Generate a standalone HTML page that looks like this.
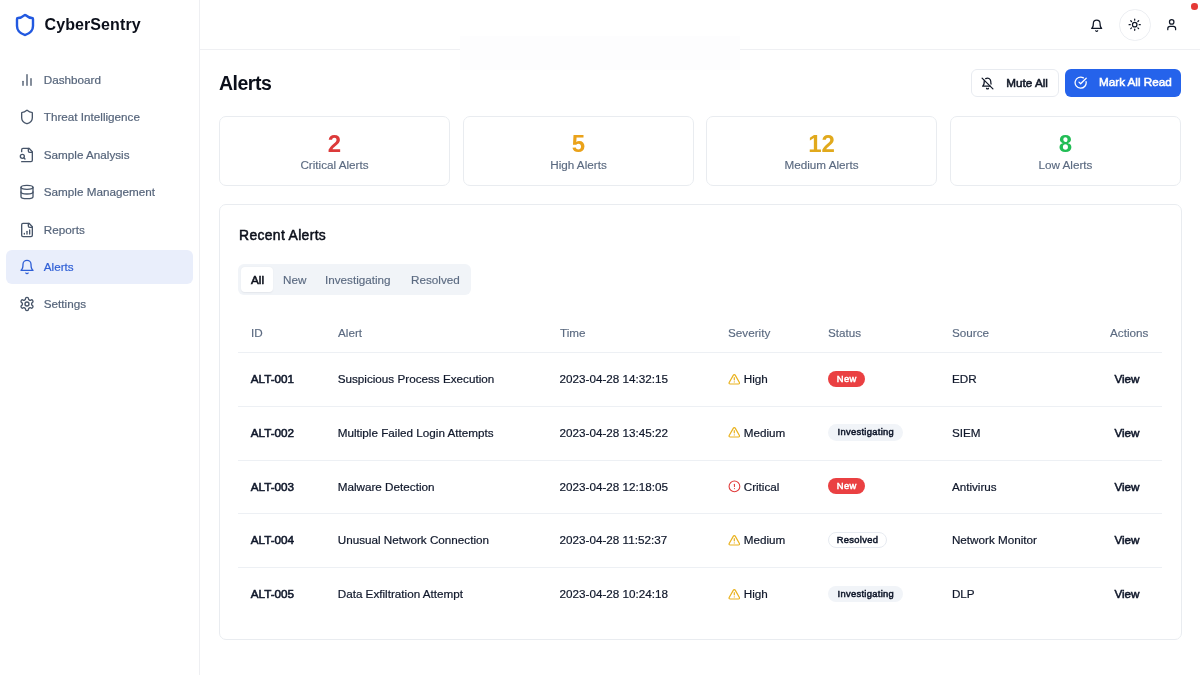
<!DOCTYPE html>
<html><head><meta charset="utf-8">
<style>
*{box-sizing:border-box;margin:0;padding:0}
html,body{width:1200px;height:675px;overflow:hidden;background:#fff;font-family:"Liberation Sans",sans-serif;color:#0f172a}
.abs{position:absolute}
svg{display:block;fill:none;stroke:currentColor;stroke-width:2;stroke-linecap:round;stroke-linejoin:round}
.t{position:absolute;white-space:nowrap;line-height:1}
#sidebar{position:absolute;left:0;top:0;width:200px;height:675px;border-right:1px solid #eeeff2;background:#fff}
.nav{position:absolute;left:6.3px;width:186.7px;height:34px;border-radius:6px}
.nav.active{background:#e9eefb}
.nav svg{position:absolute;left:12.5px;top:9px;width:16px;height:16px;color:#475569}
.nav span{position:absolute;left:37.5px;top:11px;font-size:11.7px;line-height:12px;color:#56657b;-webkit-text-stroke:0.2px currentColor;white-space:nowrap}
.nav.active svg,.nav.active span{color:#2f5fd6}
#header{position:absolute;left:200px;top:0;width:1000px;height:50px;border-bottom:1px solid #eff0f3}
.card{position:absolute;border:1px solid #e9ecf0;border-radius:7px;background:#fff}
.stat{top:116px;height:70px;width:231px}
.stat .num{position:absolute;left:0;right:0;text-align:center;top:131px;font-weight:bold;font-size:24px;line-height:24px}
.stat .lbl{position:absolute;left:0;right:0;text-align:center;font-size:11.7px;line-height:12px;color:#5b6a80;-webkit-text-stroke:0.15px currentColor}
.th{position:absolute;top:327px;font-size:11.7px;line-height:12px;color:#5b6a80;-webkit-text-stroke:0.15px currentColor;white-space:nowrap}
.row{position:absolute;left:238px;width:924px;height:54px;border-top:1px solid #edf0f4}
.cell{position:absolute;top:20px;font-size:11.7px;line-height:12px;white-space:nowrap;color:#0f172a;-webkit-text-stroke:0.2px currentColor}
.badge{position:absolute;top:17.6px;height:16.3px;border-radius:9px;font-size:9.4px;letter-spacing:0.3px;-webkit-text-stroke:0.5px currentColor;line-height:15.6px;text-align:center;white-space:nowrap}
.med{font-weight:normal;-webkit-text-stroke:0.55px currentColor!important}
body>*{will-change:transform}
</style></head><body>
<div id="sidebar">
  <svg class="abs" style="left:12.85px;top:12.8px;width:24px;height:24px;color:#2259e0;stroke-width:2.4" viewBox="0 0 24 24"><path d="M20 13c0 5-3.5 7.5-7.66 8.95a1 1 0 0 1-.67-.01C7.5 20.5 4 18 4 13V6a1 1 0 0 1 1-1c2 0 4.5-1.2 6.24-2.72a1.17 1.17 0 0 1 1.52 0C14.51 3.81 17 5 19 5a1 1 0 0 1 1 1z"/></svg>
  <div class="t" style="left:44.5px;top:17.2px;font-size:16px;letter-spacing:0.1px;font-weight:bold;color:#0b0f1a">CyberSentry</div>

  <div class="nav" style="top:63px"><svg viewBox="0 0 24 24"><line x1="18" x2="18" y1="20" y2="10"/><line x1="12" x2="12" y1="20" y2="4"/><line x1="6" x2="6" y1="20" y2="14"/></svg><span>Dashboard</span></div>
  <div class="nav" style="top:100.4px"><svg viewBox="0 0 24 24"><path d="M20 13c0 5-3.5 7.5-7.66 8.95a1 1 0 0 1-.67-.01C7.5 20.5 4 18 4 13V6a1 1 0 0 1 1-1c2 0 4.5-1.2 6.24-2.72a1.17 1.17 0 0 1 1.52 0C14.51 3.81 17 5 19 5a1 1 0 0 1 1 1z"/></svg><span>Threat Intelligence</span></div>
  <div class="nav" style="top:137.8px"><svg viewBox="0 0 24 24"><path d="M4 22h14a2 2 0 0 0 2-2V7l-5-5H6a2 2 0 0 0-2 2v3"/><path d="M14 2v4a2 2 0 0 0 2 2h4"/><path d="M5 17a3 3 0 1 0 0-6 3 3 0 0 0 0 6z"/><path d="m9 18-1.5-1.5"/></svg><span>Sample Analysis</span></div>
  <div class="nav" style="top:175.2px"><svg viewBox="0 0 24 24"><ellipse cx="12" cy="5" rx="9" ry="3"/><path d="M3 5V19A9 3 0 0 0 21 19V5"/><path d="M3 12A9 3 0 0 0 21 12"/></svg><span>Sample Management</span></div>
  <div class="nav" style="top:212.6px"><svg viewBox="0 0 24 24"><path d="M15 2H6a2 2 0 0 0-2 2v16a2 2 0 0 0 2 2h12a2 2 0 0 0 2-2V7Z"/><path d="M14 2v4a2 2 0 0 0 2 2h4"/><path d="M8 18v-1"/><path d="M12 18v-4"/><path d="M16 18v-6"/></svg><span>Reports</span></div>
  <div class="nav active" style="top:250px"><svg viewBox="0 0 24 24"><path d="M6 8a6 6 0 0 1 12 0c0 7 3 9 3 9H3s3-2 3-9"/><path d="M10.3 21a1.94 1.94 0 0 0 3.4 0"/></svg><span>Alerts</span></div>
  <div class="nav" style="top:287.4px"><svg viewBox="0 0 24 24"><path d="M12.22 2h-.44a2 2 0 0 0-2 2v.18a2 2 0 0 1-1 1.73l-.43.25a2 2 0 0 1-2 0l-.15-.08a2 2 0 0 0-2.73.73l-.22.38a2 2 0 0 0 .73 2.73l.15.1a2 2 0 0 1 1 1.72v.51a2 2 0 0 1-1 1.74l-.15.09a2 2 0 0 0-.73 2.730l.22.38a2 2 0 0 0 2.73.73l.15-.08a2 2 0 0 1 2 0l.43.25a2 2 0 0 1 1 1.73V20a2 2 0 0 0 2 2h.44a2 2 0 0 0 2-2v-.18a2 2 0 0 1 1-1.73l.43-.25a2 2 0 0 1 2 0l.15.08a2 2 0 0 0 2.73-.73l.22-.39a2 2 0 0 0-.73-2.73l-.15-.08a2 2 0 0 1-1-1.74v-.5a2 2 0 0 1 1-1.74l.15-.09a2 2 0 0 0 .73-2.73l-.22-.38a2 2 0 0 0-2.73-.73l-.15.08a2 2 0 0 1-2 0l-.43-.25a2 2 0 0 1-1-1.73V4a2 2 0 0 0-2-2z"/><circle cx="12" cy="12" r="3"/></svg><span>Settings</span></div>
</div>

<div id="header">
  <div class="abs" style="left:260px;top:36px;width:280px;height:34px;background:#fdfdfe"></div>
</div>

<!-- header icons -->
<svg class="abs" style="left:1090.1px;top:18.8px;width:13.4px;height:13.4px;color:#111827;stroke-width:2.2" viewBox="0 0 24 24"><path d="M6 8a6 6 0 0 1 12 0c0 7 3 9 3 9H3s3-2 3-9"/><path d="M10.3 21a1.94 1.94 0 0 0 3.4 0"/></svg>
<div class="abs" style="left:1118.5px;top:9px;width:31.5px;height:31.5px;border-radius:50%;border:1px solid #eceef2"></div>
<svg class="abs" style="left:1127.6px;top:18.1px;width:13.4px;height:13.4px;color:#111827;stroke-width:2.2" viewBox="0 0 24 24"><circle cx="12" cy="12" r="4"/><path d="M12 2v2"/><path d="M12 20v2"/><path d="m4.93 4.93 1.41 1.41"/><path d="m17.66 17.66 1.41 1.41"/><path d="M2 12h2"/><path d="M20 12h2"/><path d="m6.34 17.66-1.41 1.41"/><path d="m19.07 4.93-1.41 1.41"/></svg>
<svg class="abs" style="left:1165.1px;top:18.1px;width:13.4px;height:13.4px;color:#111827;stroke-width:2.2" viewBox="0 0 24 24"><path d="M19 21v-2a4 4 0 0 0-4-4H9a4 4 0 0 0-4 4v2"/><circle cx="12" cy="7" r="4"/></svg>
<div class="abs" style="left:1190.5px;top:3px;width:6.6px;height:6.6px;border-radius:50%;background:#e53935"></div>

<!-- title -->
<div class="t" style="left:219px;top:73.8px;font-size:19.5px;letter-spacing:-0.5px;font-weight:bold;color:#0b0f1a">Alerts</div>

<!-- buttons -->
<div class="abs" style="left:971px;top:69px;width:87.5px;height:28px;border:1px solid #e8ebf0;border-radius:6px;background:#fff">
  <svg class="abs" style="left:8.8px;top:7.2px;width:13px;height:13px;color:#111827;stroke-width:2.3" viewBox="0 0 24 24"><path d="M8.7 3A6 6 0 0 1 18 8a21.3 21.3 0 0 0 .6 5"/><path d="M17 17H3s3-2 3-9a4.67 4.67 0 0 1 .3-1.7"/><path d="M10.3 21a1.94 1.94 0 0 0 3.4 0"/><path d="m2 2 20 20"/></svg>
  <div class="t med" style="left:34.3px;top:6.5px;font-size:11.7px;color:#111827">Mute All</div>
</div>
<div class="abs" style="left:1065px;top:69px;width:116px;height:28px;border-radius:6px;background:#2563eb">
  <svg class="abs" style="left:9.2px;top:7.4px;width:13.3px;height:13.3px;color:#fff;stroke-width:2.3" viewBox="0 0 24 24"><path d="M21.801 10A10 10 0 1 1 17 3.335"/><path d="m9 11 3 3L22 4"/></svg>
  <div class="t med" style="left:34px;top:6.5px;font-size:11.7px;color:#fff">Mark All Read</div>
</div>

<!-- stat cards -->
<div class="card stat" style="left:219px"><div class="num" style="top:14.5px;color:#dc3a3a">2</div><div class="lbl" style="top:41.5px">Critical Alerts</div></div>
<div class="card stat" style="left:462.7px"><div class="num" style="top:14.5px;color:#eaa21a">5</div><div class="lbl" style="top:41.5px">High Alerts</div></div>
<div class="card stat" style="left:706.3px"><div class="num" style="top:14.5px;color:#e1a91c">12</div><div class="lbl" style="top:41.5px">Medium Alerts</div></div>
<div class="card stat" style="left:950.1px"><div class="num" style="top:14.5px;color:#22bd55">8</div><div class="lbl" style="top:41.5px">Low Alerts</div></div>

<!-- recent alerts card -->
<div class="card" style="left:219px;top:204px;width:962.5px;height:436px"></div>
<div class="t" style="left:238.5px;top:229.3px;font-size:13.9px;letter-spacing:0.35px;-webkit-text-stroke:0.5px currentColor;color:#0b0f1a">Recent Alerts</div>

<div class="abs" style="left:238.3px;top:264.4px;width:232.7px;height:30.8px;border-radius:6px;background:#f1f4f8">
  <div class="abs" style="left:3.2px;top:3.1px;width:31.5px;height:24.5px;border-radius:4px;background:#fff;box-shadow:0 0.5px 1.5px rgba(15,23,42,.06)"></div>
</div>
<div class="t med" style="left:250.8px;top:274px;font-size:11.7px;color:#0b0f1a">All</div>
<div class="t" style="left:283px;top:274px;font-size:11.7px;color:#5b6a80;-webkit-text-stroke:0.15px currentColor">New</div>
<div class="t" style="left:325.2px;top:274px;font-size:11.7px;color:#5b6a80;-webkit-text-stroke:0.15px currentColor">Investigating</div>
<div class="t" style="left:410.8px;top:274px;font-size:11.7px;color:#5b6a80;-webkit-text-stroke:0.15px currentColor">Resolved</div>

<!-- table header -->
<div class="th" style="left:250.8px">ID</div>
<div class="th" style="left:337.7px">Alert</div>
<div class="th" style="left:559.5px">Time</div>
<div class="th" style="left:727.9px">Severity</div>
<div class="th" style="left:828.3px">Status</div>
<div class="th" style="left:951.9px">Source</div>
<div class="th" style="left:1110.2px">Actions</div>

<div id="rows">
<div class="row" style="top:352.0px">
  <div class="cell med" style="left:12.8px">ALT-001</div>
  <div class="cell" style="left:99.7px">Suspicious Process Execution</div>
  <div class="cell" style="left:321.5px">2023-04-28 14:32:15</div>
  <svg class="abs" style="left:489.7px;top:19.6px;width:12.6px;height:12.6px;color:#e9b21e;stroke-width:2.3" viewBox="0 0 24 24"><path d="m21.73 18-8-14a2 2 0 0 0-3.48 0l-8 14A2 2 0 0 0 4 21h16a2 2 0 0 0 1.73-3Z"/><path d="M12 9v4"/><path d="M12 17h.01"/></svg><div class="cell" style="left:505.7px">High</div>
  <div class="badge" style="left:590.1px;width:37.2px;background:#ea4042;color:#fff">New</div>
  <div class="cell" style="left:713.9px">EDR</div>
  <div class="cell med" style="left:876.4px">View</div>
</div>
<div class="row" style="top:405.8px">
  <div class="cell med" style="left:12.8px">ALT-002</div>
  <div class="cell" style="left:99.7px">Multiple Failed Login Attempts</div>
  <div class="cell" style="left:321.5px">2023-04-28 13:45:22</div>
  <svg class="abs" style="left:489.7px;top:19.6px;width:12.6px;height:12.6px;color:#e9b21e;stroke-width:2.3" viewBox="0 0 24 24"><path d="m21.73 18-8-14a2 2 0 0 0-3.48 0l-8 14A2 2 0 0 0 4 21h16a2 2 0 0 0 1.73-3Z"/><path d="M12 9v4"/><path d="M12 17h.01"/></svg><div class="cell" style="left:505.7px">Medium</div>
  <div class="badge" style="left:590.3px;width:75px;background:#f1f4f8;color:#0f172a">Investigating</div>
  <div class="cell" style="left:713.9px">SIEM</div>
  <div class="cell med" style="left:876.4px">View</div>
</div>
<div class="row" style="top:459.6px">
  <div class="cell med" style="left:12.8px">ALT-003</div>
  <div class="cell" style="left:99.7px">Malware Detection</div>
  <div class="cell" style="left:321.5px">2023-04-28 12:18:05</div>
  <svg class="abs" style="left:489.7px;top:19.2px;width:12.9px;height:12.9px;color:#e03b3b" viewBox="0 0 24 24"><circle cx="12" cy="12" r="10"/><line x1="12" x2="12" y1="8" y2="12"/><line x1="12" x2="12.01" y1="16" y2="16"/></svg><div class="cell" style="left:505.7px">Critical</div>
  <div class="badge" style="left:590.1px;width:37.2px;background:#ea4042;color:#fff">New</div>
  <div class="cell" style="left:713.9px">Antivirus</div>
  <div class="cell med" style="left:876.4px">View</div>
</div>
<div class="row" style="top:513.4px">
  <div class="cell med" style="left:12.8px">ALT-004</div>
  <div class="cell" style="left:99.7px">Unusual Network Connection</div>
  <div class="cell" style="left:321.5px">2023-04-28 11:52:37</div>
  <svg class="abs" style="left:489.7px;top:19.6px;width:12.6px;height:12.6px;color:#e9b21e;stroke-width:2.3" viewBox="0 0 24 24"><path d="m21.73 18-8-14a2 2 0 0 0-3.48 0l-8 14A2 2 0 0 0 4 21h16a2 2 0 0 0 1.73-3Z"/><path d="M12 9v4"/><path d="M12 17h.01"/></svg><div class="cell" style="left:505.7px">Medium</div>
  <div class="badge" style="left:590.3px;width:58.4px;background:#fff;border:1px solid #e6eaf0;line-height:13.6px;color:#0f172a">Resolved</div>
  <div class="cell" style="left:713.9px">Network Monitor</div>
  <div class="cell med" style="left:876.4px">View</div>
</div>
<div class="row" style="top:567.2px">
  <div class="cell med" style="left:12.8px">ALT-005</div>
  <div class="cell" style="left:99.7px">Data Exfiltration Attempt</div>
  <div class="cell" style="left:321.5px">2023-04-28 10:24:18</div>
  <svg class="abs" style="left:489.7px;top:19.6px;width:12.6px;height:12.6px;color:#e9b21e;stroke-width:2.3" viewBox="0 0 24 24"><path d="m21.73 18-8-14a2 2 0 0 0-3.48 0l-8 14A2 2 0 0 0 4 21h16a2 2 0 0 0 1.73-3Z"/><path d="M12 9v4"/><path d="M12 17h.01"/></svg><div class="cell" style="left:505.7px">High</div>
  <div class="badge" style="left:590.3px;width:75px;background:#f1f4f8;color:#0f172a">Investigating</div>
  <div class="cell" style="left:713.9px">DLP</div>
  <div class="cell med" style="left:876.4px">View</div>
</div>
</div>
</body></html>
